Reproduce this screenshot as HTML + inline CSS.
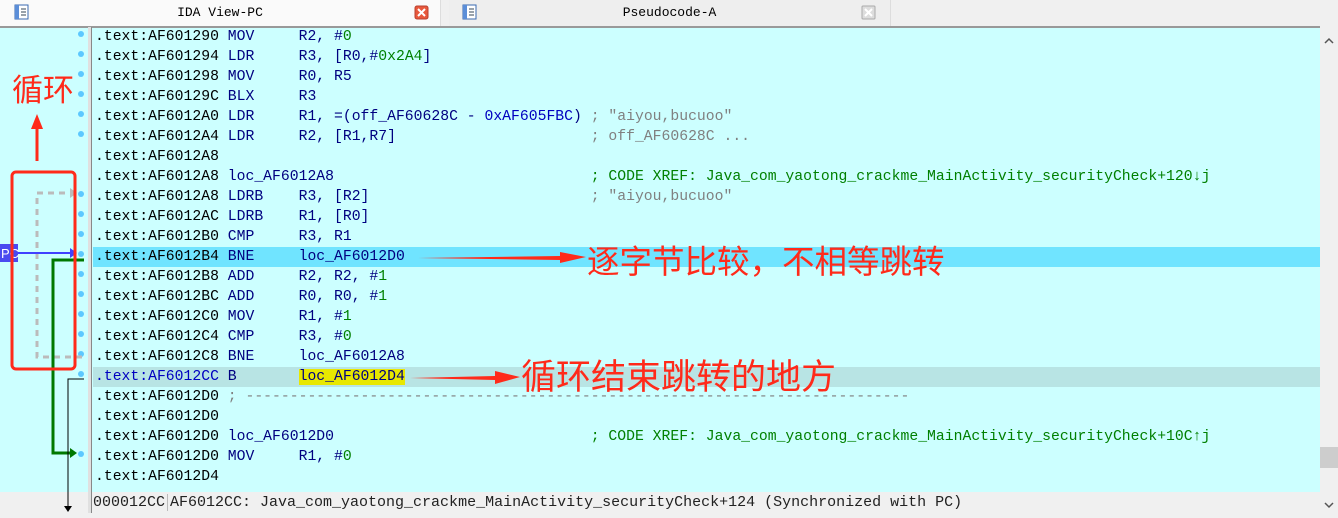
<!DOCTYPE html>
<html><head><meta charset="utf-8"><style>
*{margin:0;padding:0;box-sizing:border-box}
body{width:1338px;height:513px;overflow:hidden;background:#f0f0f0;position:relative;font-family:"Liberation Mono","DejaVu Sans Mono",monospace}
.tab{position:absolute;top:0;height:26px;background:#f5f5f5;border-right:1px solid #ddd;font-size:13px;line-height:26px;text-align:center;color:#000}
.code{position:absolute;left:0;top:26px;width:1320px;height:466px;background:#ccffff;border-top:2px solid #999}
.gut{position:absolute;left:88px;top:27px;width:4px;height:486px;background:#e0e0e0;border-right:1px solid #888}
.ln{position:absolute;left:95px;height:20px;line-height:21px;font-size:14.75px;white-space:pre;color:#000}
.hl{position:absolute;left:93px;width:1227px;height:20px}
.m{color:#000080}.n{color:#008000}.g{color:#808080}.c{color:#008000}.b{color:#0000c0}
.ann{position:absolute;color:#ff2a1a;font-family:"Liberation Sans","Noto Sans CJK SC",sans-serif;white-space:nowrap}
.sb{position:absolute;left:1320px;top:27px;width:18px;height:486px;background:#f0f0f0}
.st{position:absolute;left:93px;top:492px;width:1227px;height:21px;background:#f0f0f0;font-family:"Liberation Mono",monospace;font-size:15px;line-height:21px;white-space:pre;color:#222}
</style></head><body>
<div class="tab" style="left:0;width:441px;background:#fafafa">IDA View-PC</div>
<div class="tab" style="left:449px;width:442px;background:#eee">Pseudocode-A</div>
<svg style="position:absolute;left:0;top:0" width="900" height="26">
<rect x="15" y="5" width="13" height="14" fill="#fff" stroke="#3a6ab0"/><rect x="15" y="5" width="4" height="14" fill="#5b8ed8"/><line x1="21" y1="9" x2="26" y2="9" stroke="#345"/><line x1="21" y1="12" x2="26" y2="12" stroke="#345"/><line x1="21" y1="15" x2="26" y2="15" stroke="#345"/>
<rect x="463" y="5" width="13" height="14" fill="#fff" stroke="#3a6ab0"/><rect x="463" y="5" width="4" height="14" fill="#5b8ed8"/><line x1="469" y1="9" x2="474" y2="9" stroke="#345"/><line x1="469" y1="12" x2="474" y2="12" stroke="#345"/><line x1="469" y1="15" x2="474" y2="15" stroke="#345"/>
<rect x="415" y="6" width="13" height="13" rx="2" fill="#e8583c" stroke="#b84030"/><path d="M418 9l7 7M425 9l-7 7" stroke="#fff" stroke-width="2"/>
<rect x="862" y="6" width="13" height="13" rx="1" fill="#ddd" stroke="#aaa"/><path d="M865 9l7 7M872 9l-7 7" stroke="#fff" stroke-width="2"/>
</svg>
<div class="code"></div>
<div class="hl" style="top:247px;background:#70e4ff"></div>
<div class="hl" style="top:367px;background:#b8e4e4"></div>
<div class="gut"></div>
<div class="ln" style="top:27px">.text:AF601290 <span class="m">MOV     R2, #</span><span class="n">0</span></div>
<div class="ln" style="top:47px">.text:AF601294 <span class="m">LDR     R3, [R0,#</span><span class="n">0x2A4</span><span class="m">]</span></div>
<div class="ln" style="top:67px">.text:AF601298 <span class="m">MOV     R0, R5</span></div>
<div class="ln" style="top:87px">.text:AF60129C <span class="m">BLX     R3</span></div>
<div class="ln" style="top:107px">.text:AF6012A0 <span class="m">LDR     R1, =(off_AF60628C - </span><span class="b">0xAF605FBC</span><span class="m">)</span> <span class="g">; "aiyou,bucuoo"</span></div>
<div class="ln" style="top:127px">.text:AF6012A4 <span class="m">LDR     R2, [R1,R7]</span>                      <span class="g">; off_AF60628C ...</span></div>
<div class="ln" style="top:147px">.text:AF6012A8</div>
<div class="ln" style="top:167px">.text:AF6012A8 <span class="m">loc_AF6012A8</span>                             <span class="c">; CODE XREF: Java_com_yaotong_crackme_MainActivity_securityCheck+120↓j</span></div>
<div class="ln" style="top:187px">.text:AF6012A8 <span class="m">LDRB    R3, [R2]</span>                         <span class="g">; "aiyou,bucuoo"</span></div>
<div class="ln" style="top:207px">.text:AF6012AC <span class="m">LDRB    R1, [R0]</span></div>
<div class="ln" style="top:227px">.text:AF6012B0 <span class="m">CMP     R3, R1</span></div>
<div class="ln" style="top:247px">.text:AF6012B4 <span class="m">BNE     loc_AF6012D0</span></div>
<div class="ln" style="top:267px">.text:AF6012B8 <span class="m">ADD     R2, R2, #</span><span class="n">1</span></div>
<div class="ln" style="top:287px">.text:AF6012BC <span class="m">ADD     R0, R0, #</span><span class="n">1</span></div>
<div class="ln" style="top:307px">.text:AF6012C0 <span class="m">MOV     R1, #</span><span class="n">1</span></div>
<div class="ln" style="top:327px">.text:AF6012C4 <span class="m">CMP     R3, #</span><span class="n">0</span></div>
<div class="ln" style="top:347px">.text:AF6012C8 <span class="m">BNE     loc_AF6012A8</span></div>
<div class="ln" style="top:367px"><span class="b">.text:AF6012CC</span> <span class="m">B       <span style="background:#e8e800">loc_AF6012D4</span></span></div>
<div class="ln" style="top:387px">.text:AF6012D0 <span class="g">; ---------------------------------------------------------------------------</span></div>
<div class="ln" style="top:407px">.text:AF6012D0</div>
<div class="ln" style="top:427px">.text:AF6012D0 <span class="m">loc_AF6012D0</span>                             <span class="c">; CODE XREF: Java_com_yaotong_crackme_MainActivity_securityCheck+10C↑j</span></div>
<div class="ln" style="top:447px">.text:AF6012D0 <span class="m">MOV     R1, #</span><span class="n">0</span></div>
<div class="ln" style="top:467px">.text:AF6012D4</div>
<div class="st">000012CC<span style="border-left:1px solid #bbb;margin-left:2px;padding-left:2px">AF6012CC: Java_com_yaotong_crackme_MainActivity_securityCheck+124 (Synchronized with PC)</span></div>
<div class="sb"><svg width="18" height="486"><path d="M5 16l4-4 4 4" stroke="#555" fill="none" stroke-width="1.5"/><rect x="0" y="420" width="18" height="21" fill="#cdcdcd"/><path d="M5 476l4 4 4-4" stroke="#555" fill="none" stroke-width="1.5"/></svg></div>
<svg style="position:absolute;left:0;top:27px" width="93" height="486">
<g fill="#5cc8ff">
<circle cx="81" cy="7" r="3"/><circle cx="81" cy="27" r="3"/><circle cx="81" cy="47" r="3"/><circle cx="81" cy="67" r="3"/><circle cx="81" cy="87" r="3"/><circle cx="81" cy="107" r="3"/>
<circle cx="81" cy="167" r="3"/><circle cx="81" cy="187" r="3"/><circle cx="81" cy="207" r="3"/><circle cx="81" cy="227" r="3"/><circle cx="81" cy="247" r="3"/><circle cx="81" cy="267" r="3"/><circle cx="81" cy="287" r="3"/><circle cx="81" cy="307" r="3"/><circle cx="81" cy="327" r="3"/><circle cx="81" cy="347" r="3"/><circle cx="81" cy="427" r="3"/>
</g>
<path d="M82 330H37V166H72" stroke="#bbb" stroke-width="3" stroke-dasharray="6,5" fill="none"/>
<path d="M70 161l7 5-7 5z" fill="#bbb"/>
<path d="M84 233H53V426H72" stroke="#007800" stroke-width="3" fill="none"/>
<path d="M70 421l7 5-7 5z" fill="#007800"/>
<path d="M84 352H68V480" stroke="#000" stroke-width="1" fill="none"/>
<path d="M64 479l4 6 4-6z" fill="#000"/>
<path d="M18 226H72" stroke="#4040ff" stroke-width="2"/>
<path d="M70 221l7 5-7 5z" fill="#4040ff"/>
<rect x="0" y="217" width="18" height="18" fill="#4a4af0"/>
<text x="1" y="231" font-family="Liberation Sans" font-size="13" fill="#fff">PC</text>
<rect x="12" y="145" width="63" height="197" rx="4" stroke="#ff2a1a" stroke-width="3" fill="none"/>
<path d="M37 134V100" stroke="#ff2a1a" stroke-width="3"/>
<path d="M31 102l6-15 6 15z" fill="#ff2a1a"/>
</svg>
<div class="ann" style="left:12px;top:71px;font-size:31px;line-height:40px">循环</div>
<svg style="position:absolute;left:410px;top:240px" width="180" height="150">
<path d="M8 18L150 16V12L176 17L150 23V20Z" fill="#ff2a1a"/>
<path d="M0 138L85 136V131L110 137L85 144V140Z" fill="#ff2a1a"/>
</svg>
<div class="ann" style="left:587px;top:240px;font-size:32.5px;line-height:44px">逐字节比较，不相等跳转</div>
<div class="ann" style="left:521px;top:356px;font-size:35px;line-height:44px">循环结束跳转的地方</div>
</body></html>
